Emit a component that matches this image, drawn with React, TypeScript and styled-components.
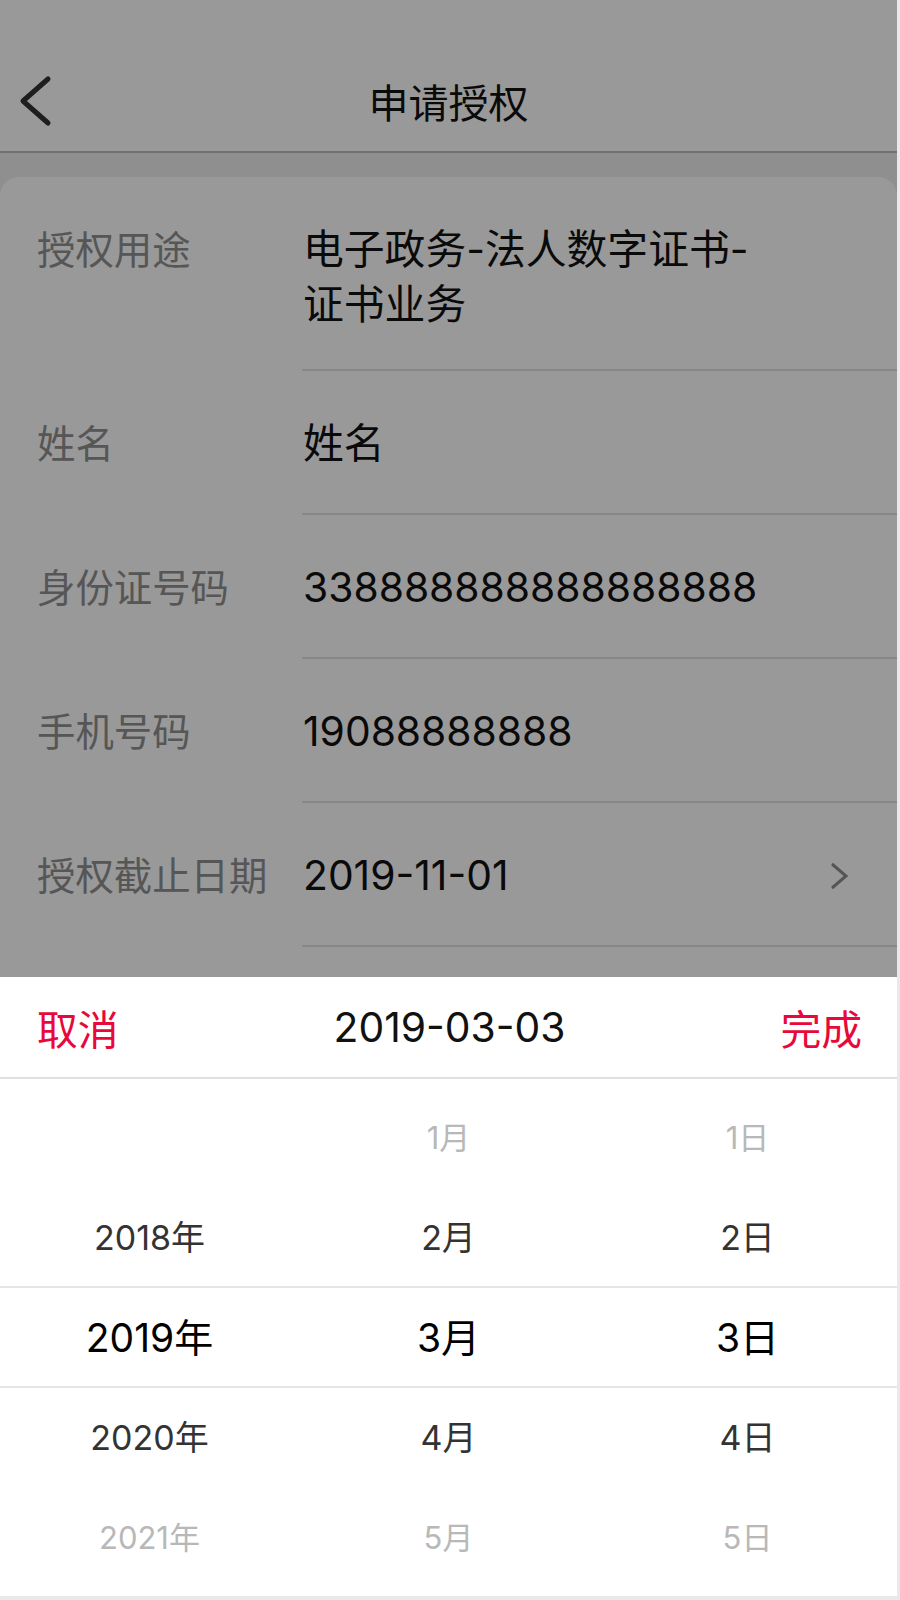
import * as React from "react";
import styled, { createGlobalStyle } from "styled-components";

const font = `"Inter", "Noto Sans CJK SC", sans-serif`;

const fields = [
  { label: "授权用途", value: "电子政务-法人数字证书-证书业务" },
  { label: "姓名", value: "姓名" },
  { label: "身份证号码", value: "338888888888888888" },
  { label: "手机号码", value: "19088888888" },
  { label: "授权截止日期", value: "2019-11-01", arrow: true },
];

const columns = [
  ["", "2018年", "2019年", "2020年", "2021年"],
  ["1月", "2月", "3月", "4月", "5月"],
  ["1日", "2日", "3日", "4日", "5日"],
];

const SELECTED = 2;

export default () => {
  return (
    <>
      <GlobalStyle />
      <Root>
        <Header>
          <NavBar>
            <BackButton>
              <svg width="36" height="60" viewBox="0 0 36 60">
                <polyline
                  points="30,8 5,30 30,52"
                  fill="none"
                  stroke="#333"
                  strokeWidth="5"
                  strokeLinecap="round"
                  strokeLinejoin="round"
                />
              </svg>
            </BackButton>
            <Title>申请授权</Title>
            <span />
          </NavBar>
        </Header>

        <Card>
          {fields.map((f) => (
            <Row key={f.label}>
              <Label>{f.label}</Label>
              <ValueCell>
                <ValueText>{f.value}</ValueText>
                {f.arrow && (
                  <Chevron width="20" height="28" viewBox="0 0 20 28">
                    <polyline
                      points="3,2 17,14 3,26"
                      fill="none"
                      stroke="#8e8e8e"
                      strokeWidth="3"
                    />
                  </Chevron>
                )}
              </ValueCell>
            </Row>
          ))}
        </Card>

        <Mask />

        <Sheet>
          <SheetHeader>
            <Action>取消</Action>
            <SheetTitle>2019-03-03</SheetTitle>
            <Action $end>完成</Action>
          </SheetHeader>
          <Wheel>
            <Band />
            {columns.map((items, c) => (
              <WheelColumn key={c}>
                {items.map((item, i) => (
                  <WheelItem key={i} $distance={Math.abs(i - SELECTED)}>
                    {item}
                  </WheelItem>
                ))}
              </WheelColumn>
            ))}
          </Wheel>
        </Sheet>
      </Root>
    </>
  );
};

// ----------------------------------------------------------------------------

const GlobalStyle = createGlobalStyle`
  html, body {
    margin: 0;
    padding: 0;
    background: #e9e9e9;
    font-family: ${font};
  }
`;

const Root = styled.div`
  position: relative;
  width: 897px;
  height: 1596px;
  background: #eeeeee;
  display: flex;
  flex-direction: column;
  overflow: hidden;
`;

const Header = styled.div`
  background: #ffffff;
  padding-top: 50px;
  border-bottom: 2px solid #bcbcbc;
`;

const NavBar = styled.div`
  height: 101px;
  display: grid;
  grid-template-columns: 1fr auto 1fr;
  align-items: center;
`;

const BackButton = styled.div`
  padding-left: 18px;
  display: flex;
  align-items: center;
`;

const Title = styled.div`
  font-size: 40px;
  color: #111;
`;

const Card = styled.div`
  flex: 1;
  margin-top: 24px;
  background: #ffffff;
  border-radius: 19px 19px 0 0;
`;

const Row = styled.div`
  display: flex;
  align-items: flex-start;
`;

const Label = styled.div`
  width: 302px;
  flex-shrink: 0;
  box-sizing: border-box;
  padding: 46px 0 0 37px;
  font-size: 38.4px;
  line-height: 55px;
  color: #909090;
  white-space: nowrap;
`;

const ValueCell = styled.div`
  flex: 1;
  box-sizing: border-box;
  min-height: 144px;
  padding: 45px 48px 37px 1px;
  display: flex;
  align-items: flex-start;
  border-bottom: 2px solid #e0e0e0;
`;

const ValueText = styled.div`
  max-width: 470px;
  font-size: 40.8px;
  line-height: 55px;
  color: #111;
`;

const Chevron = styled.svg`
  margin-left: auto;
  margin-top: 14px;
  flex-shrink: 0;
`;

const Mask = styled.div`
  position: absolute;
  inset: 0;
  background: rgba(0, 0, 0, 0.4);
`;

const Sheet = styled.div`
  position: absolute;
  left: 0;
  right: 0;
  bottom: 0;
  background: #ffffff;
`;

const SheetHeader = styled.div`
  height: 100px;
  padding: 0 35px 0 37px;
  display: grid;
  grid-template-columns: 1fr auto 1fr;
  align-items: center;
  border-bottom: 2px solid #e0e0e0;
`;

const Action = styled.div<{ $end?: boolean }>`
  font-size: 40.8px;
  color: #e8083a;
  justify-self: ${(p) => (p.$end ? "end" : "start")};
`;

const SheetTitle = styled.div`
  font-size: 40.8px;
  color: #111;
`;

const Wheel = styled.div`
  position: relative;
  padding: 6px 0 11px;
  display: grid;
  grid-template-columns: 1fr 1fr 1fr;
`;

const Band = styled.div`
  position: absolute;
  left: 0;
  right: 0;
  top: 207px;
  height: 98px;
  border-top: 2px solid #e6e6e6;
  border-bottom: 2px solid #e6e6e6;
  pointer-events: none;
`;

const WheelColumn = styled.div`
  display: flex;
  flex-direction: column;
`;

const itemSize = ["39px", "34px", "31px"];
const itemColor = ["#000000", "#333333", "#b8b8b8"];

const WheelItem = styled.div<{ $distance: number }>`
  height: 100px;
  display: flex;
  align-items: center;
  justify-content: center;
  font-size: ${(p) => itemSize[p.$distance]};
  color: ${(p) => itemColor[p.$distance]};
`;
